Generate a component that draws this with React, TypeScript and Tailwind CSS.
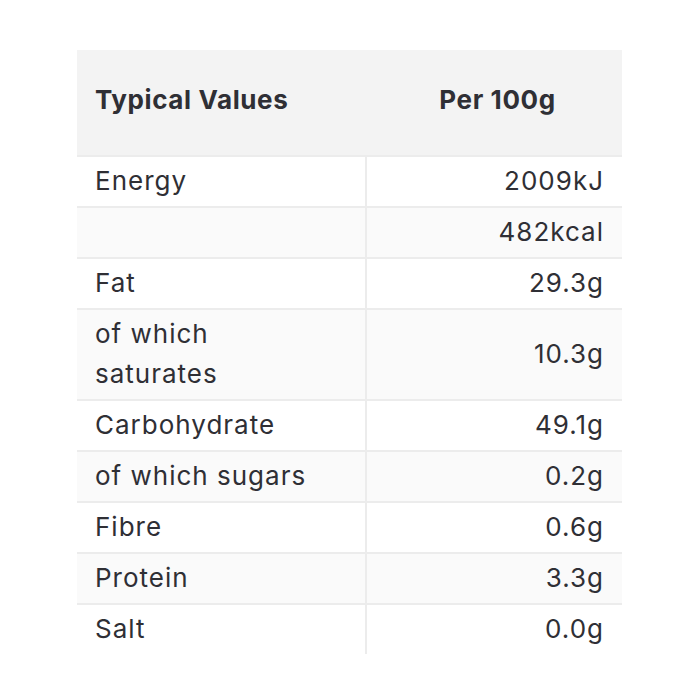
const rows: [string, string][] = [
  ["Energy", "2009kJ"],
  ["", "482kcal"],
  ["Fat", "29.3g"],
  ["of which saturates", "10.3g"],
  ["Carbohydrate", "49.1g"],
  ["of which sugars", "0.2g"],
  ["Fibre", "0.6g"],
  ["Protein", "3.3g"],
  ["Salt", "0.0g"],
];

export default function App() {
  return (
    <div className="w-[700px] h-[700px] bg-white pt-[50px] pl-[77px] font-['Inter',sans-serif] text-[#2f2f35] text-[26px]">
      <div className="w-[545px]">
        <div className="grid grid-cols-[288px_257px] h-[105px] items-center bg-[#f3f3f3] font-bold tracking-[0.6px] pb-[6px]">
          <div className="pl-[18px]">Typical Values</div>
          <div className="text-center pl-[8px]">Per 100g</div>
        </div>
        {rows.map(([label, value], i) => (
          <div
            key={i}
            className={`grid grid-cols-[288px_257px] border-t-2 border-[#ececec] leading-[40px] tracking-[1px] ${i % 2 === 1 ? "bg-[#fafafa]" : "bg-white"}`}
          >
            <div className="pl-[18px] pr-[40px] pt-[4px] pb-[5px]">{label}</div>
            <div className="border-l-2 border-[#ececec] pr-[18px] pt-[4px] pb-[5px] flex items-center justify-end">
              {value}
            </div>
          </div>
        ))}
      </div>
    </div>
  );
}
